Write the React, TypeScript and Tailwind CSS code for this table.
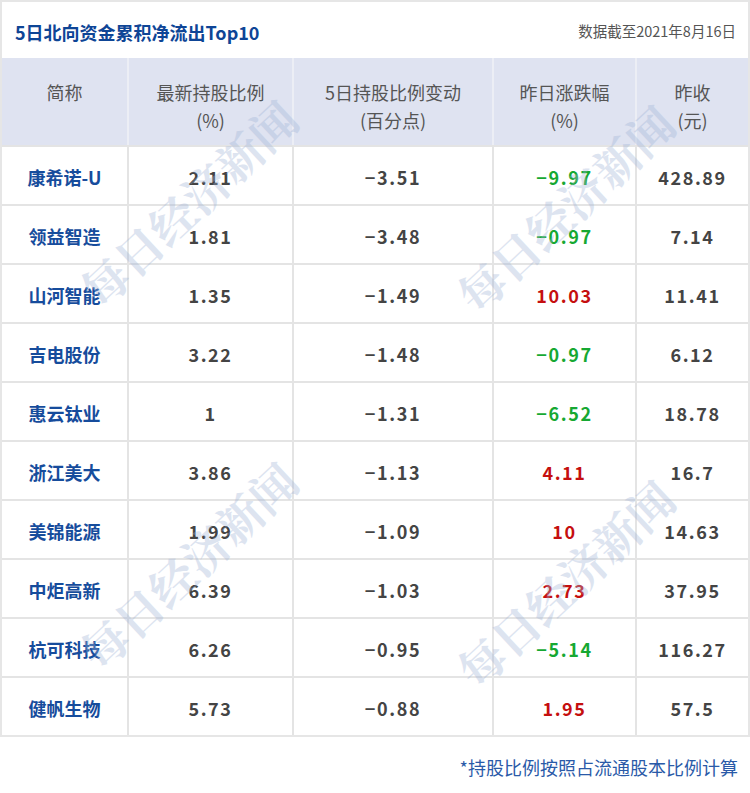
const rows = [
  { name: "康希诺-U", hold: "2.11", change: "−3.51", pct: "−9.97", close: "428.89" },
  { name: "领益智造", hold: "1.81", change: "−3.48", pct: "−0.97", close: "7.14" },
  { name: "山河智能", hold: "1.35", change: "−1.49", pct: "10.03", close: "11.41" },
  { name: "吉电股份", hold: "3.22", change: "−1.48", pct: "−0.97", close: "6.12" },
  { name: "惠云钛业", hold: "1", change: "−1.31", pct: "−6.52", close: "18.78" },
  { name: "浙江美大", hold: "3.86", change: "−1.13", pct: "4.11", close: "16.7" },
  { name: "美锦能源", hold: "1.99", change: "−1.09", pct: "10", close: "14.63" },
  { name: "中炬高新", hold: "6.39", change: "−1.03", pct: "2.73", close: "37.95" },
  { name: "杭可科技", hold: "6.26", change: "−0.95", pct: "−5.14", close: "116.27" },
  { name: "健帆生物", hold: "5.73", change: "−0.88", pct: "1.95", close: "57.5" },
];

const cols = "grid grid-cols-[125px_163px_198px_141px_111px] gap-x-[2px]";
const font = { fontFamily: '"Noto Sans CJK SC", "Noto Sans", sans-serif' };
const num = "bg-white flex items-center justify-center pt-[3px] text-[18px] font-semibold tracking-[0.09em]";

// watermark centers
const marks = [
  { x: 188, y: 203 },
  { x: 565, y: 208 },
  { x: 188, y: 565 },
  { x: 565, y: 583 },
];

export default function App() {
  return (
    <div className="relative w-[750px] h-[793px] bg-white overflow-hidden" style={font}>
      <div className="border-2 border-[#e6e6e6]">
        <div className="h-[56px] flex items-center justify-between pl-[13px] pr-[12px] bg-white">
          <span className="text-[18px] font-bold text-[#0e4596] mt-[4px]">5日北向资金累积净流出Top10</span>
          <span className="text-[14.5px] text-[#555] mt-[1px]">数据截至2021年8月16日</span>
        </div>
        <div className={`${cols} bg-[#eceef5]`}>
          {[
            ["简称", ""],
            ["最新持股比例", "(%)"],
            ["5日持股比例变动", "(百分点)"],
            ["昨日涨跌幅", "(%)"],
            ["昨收", "(元)"],
          ].map(([a, b], i) => (
            <div key={i} className="h-[87px] bg-[#dfe3f1] flex flex-col items-center pt-[20px] text-[18px] leading-[28px] text-[#555]">
              <span>{a}</span>
              {b && <span>{b}</span>}
            </div>
          ))}
        </div>
        <div className="flex flex-col gap-y-[2px] bg-[#e4e4e4] pt-[2px]">
          {rows.map((r) => {
            const neg = r.pct.startsWith("−");
            return (
              <div key={r.name} className={`${cols} h-[57px]`}>
                <div className="bg-white flex items-center justify-center pt-[3px] text-[18px] font-bold text-[#164c9c]">{r.name}</div>
                <div className={`${num} text-[#444]`}>{r.hold}</div>
                <div className={`${num} text-[#444]`}>{r.change}</div>
                <div className={`${num} ${neg ? "text-[#16a832]" : "text-[#c50f0f]"}`}>{r.pct}</div>
                <div className={`${num} text-[#444]`}>{r.close}</div>
              </div>
            );
          })}
        </div>
      </div>
      <div className="flex justify-end pr-[12px] pt-[17px] text-[18px] leading-[26px] text-[#2a5aa8]">*持股比例按照占流通股本比例计算</div>
      {marks.map((m, i) => (
        <div
          key={i}
          className="absolute pointer-events-none whitespace-nowrap text-[46px] font-bold text-[#9fb3d6] opacity-35"
          style={{ left: m.x, top: m.y, transform: "translate(-50%, -50%) rotate(-43deg)", fontFamily: '"Noto Serif CJK SC", "Noto Sans CJK SC", serif' }}
        >
          每日经济新闻
        </div>
      ))}
    </div>
  );
}
